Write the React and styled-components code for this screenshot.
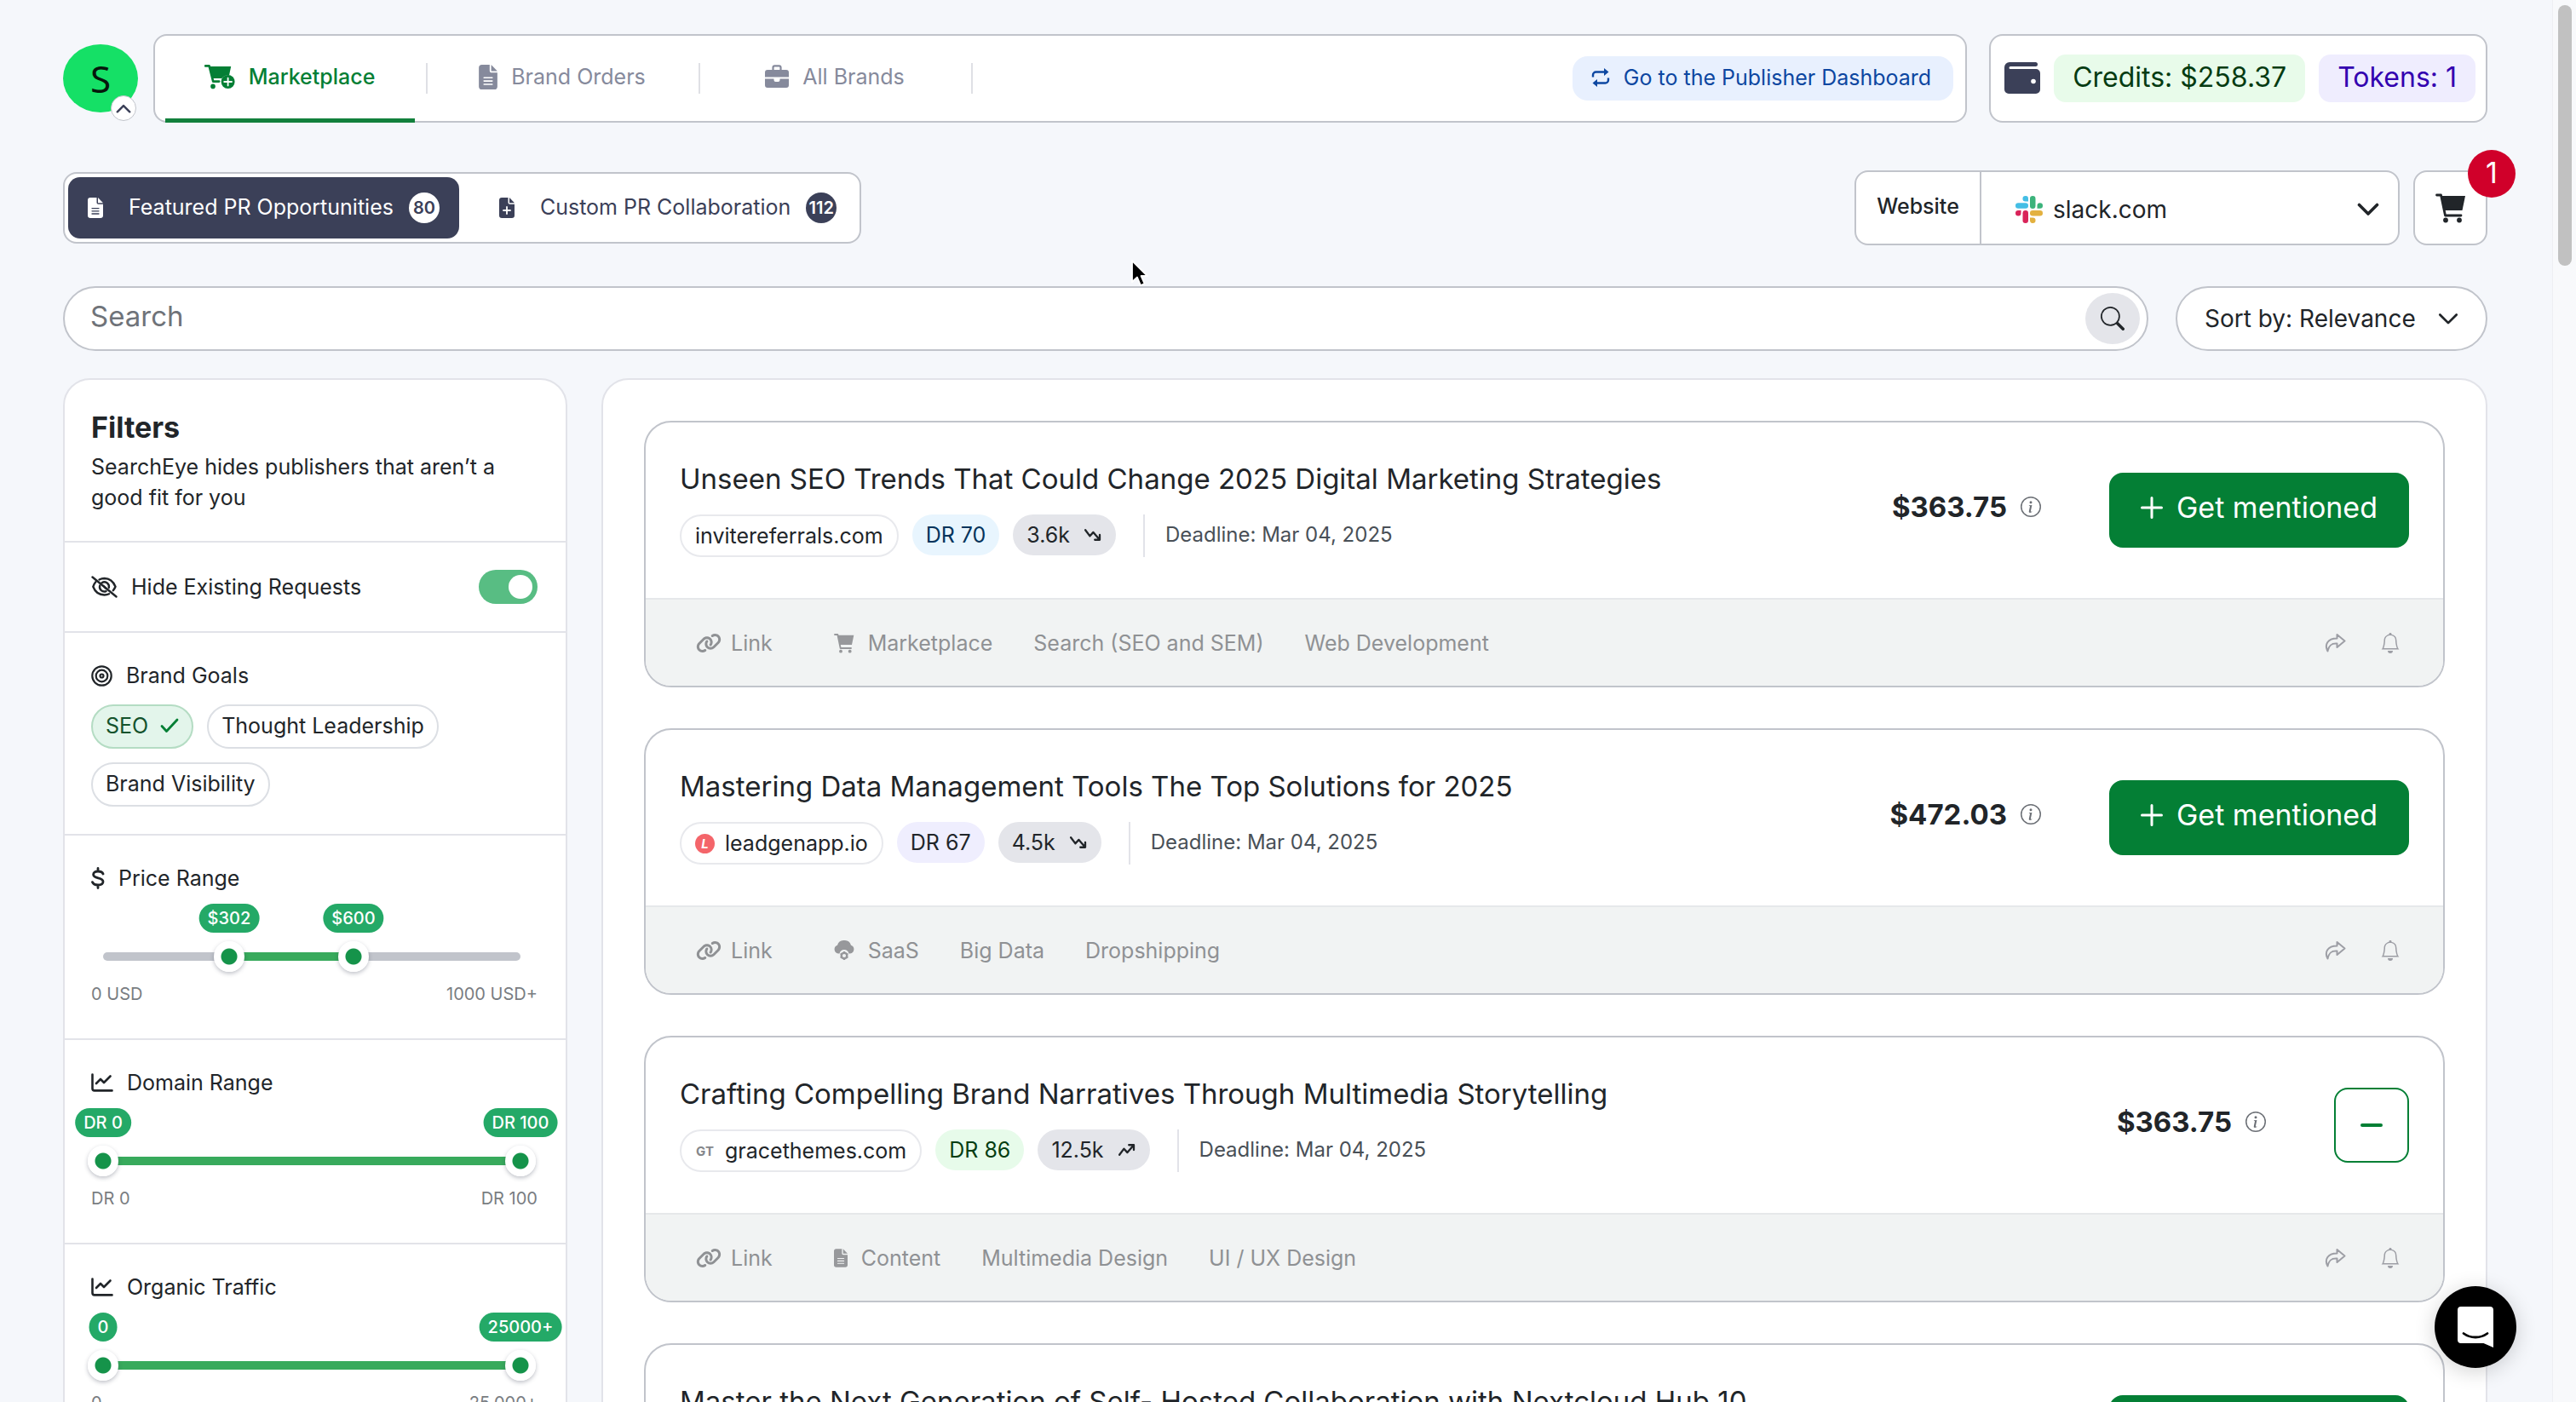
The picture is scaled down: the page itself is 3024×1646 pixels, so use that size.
import React, { useState } from "react";
import styled, { createGlobalStyle, css } from "styled-components";
import { FaLink } from "react-icons/fa6";
import { BsBell, BsInfoCircle, BsSearch } from "react-icons/bs";

const GlobalStyle = createGlobalStyle`
  *, *::before, *::after { box-sizing: border-box; }
  body {
    margin: 0;
    background: #f5f7fb;
    color: #212529;
    font-family: Inter, "Liberation Sans", sans-serif;
    font-size: 25px;
    line-height: 36px;
  }
  h1, h2, h3, p { margin: 0; padding: 0; font-size: inherit; font-weight: inherit; }
  a { color: inherit; text-decoration: none; }
  button, input, select { font: inherit; color: inherit; margin: 0; }
  button { cursor: pointer; }
  svg { display: block; flex: none; }
`;

const line = "#c1c4cb";
const softLine = "#e2e3e9";
const navy = "#3b4058";
const green = "#047f35";

/* ---------- icons ---------- */

const CartPlusIcon = () => (
  <svg width="36" height="30" viewBox="0 0 36 30" fill="none">
    <path d="M5.8 3h25.4L29 13.4c-3-.6-7 .8-8.600 3.600H9.600z" fill={green} />
    <path d="M1 2.400h4.600L10.200 20.600h7" stroke={green} strokeWidth="2.600" strokeLinecap="round" strokeLinejoin="round" />
    <circle cx="10" cy="26.400" r="2.800" fill={green} />
    <circle cx="27.600" cy="21" r="8" fill={green} />
    <path d="M27.600 16.600v8.800M23.200 21h8.800" stroke="#fff" strokeWidth="1.800" strokeLinecap="round" />
  </svg>
);

const FileIcon = ({ w = 18, h = 24, fill = "#fff", ink = navy, plus }) => (
  <svg width={w} height={h} viewBox="0 0 18 24">
    <path d="M3 0h7.500v5.500C10.500 7 11.200 7.700 12.600 7.700H18V21a3 3 0 0 1-3 3H3a3 3 0 0 1-3-3V3a3 3 0 0 1 3-3z" fill={fill} />
    <path d="M12 0 18 6.200h-6z" fill={fill} />
    {plus ? (
      <path d="M9 11v8M5 15h8" stroke={ink} strokeWidth="1.800" strokeLinecap="round" />
    ) : (
      <path d="M5 12.600h8M5 15.800h8M5 19h8" stroke={ink} strokeWidth="1.300" strokeLinecap="round" />
    )}
  </svg>
);

const BriefcaseIcon = () => (
  <svg width="28" height="28" viewBox="0 0 28 28">
    <path d="M9.500 6V3.200c0-1 .6-1.800 1.800-1.800h5.400c1.200 0 1.800.8 1.800 1.800V6" fill="none" stroke="#868a9c" strokeWidth="2.200" />
    <path d="M3 6h22a3 3 0 0 1 3 3v5.500H0V9a3 3 0 0 1 3-3zM0 16.500h10.500v1.500a2 2 0 0 0 2 2h3a2 2 0 0 0 2-2v-1.500H28V24a3 3 0 0 1-3 3H3a3 3 0 0 1-3-3z" fill="#868a9c" />
  </svg>
);

const SwapIcon = () => (
  <svg width="22" height="24" viewBox="0 0 22 24" fill="none" stroke="#0d47a1" strokeWidth="2.400">
    <path d="M2 11.500V9a3.500 3.500 0 0 1 3.500-3.500h11M20 12.500V15a3.500 3.500 0 0 1-3.500 3.500h-11" />
    <path d="M15 1l5.500 4.500L15 10zM7 14l-5.500 4.500L7 23z" fill="#0d47a1" stroke="none" />
  </svg>
);

const WalletIcon = () => (
  <svg width="42" height="38" viewBox="0 0 42 38">
    <path d="M6 0h30.500a2.500 2.500 0 0 1 0 5H7a1.500 1.500 0 0 0 0 3h30a5 5 0 0 1 5 5v19a5 5 0 0 1-5 5H5a5 5 0 0 1-5-5V6a6 6 0 0 1 6-6z" fill={navy} />
    <circle cx="34" cy="22.500" r="2.800" fill="#fff" />
  </svg>
);

const CartIcon = ({ size = 36, fill = "#212529" }) => (
  <svg width={size} height={size} viewBox="0 0 36 36" fill="none">
    <path d="M7 4h28l-3.500 17H10.500z" fill={fill} />
    <path d="M1.500 3h5l5 24H30" stroke={fill} strokeWidth="2.800" strokeLinecap="round" strokeLinejoin="round" />
    <circle cx="12" cy="32.500" r="2.900" fill={fill} />
    <circle cx="28" cy="32.500" r="2.900" fill={fill} />
  </svg>
);

const SlackIcon = () => (
  <svg width="32" height="32" viewBox="0 0 32 32">
    <g fill="#44bee5"><path d="M11.700 0a3.200 3.200 0 1 0 0 6.500h3.300V3.200A3.200 3.200 0 0 0 11.700 0z" /><rect y="8.300" width="15" height="6.500" rx="3.200" /></g>
    <g fill="#3bb37b"><rect x="17" width="6.500" height="15" rx="3.200" /><path d="M32 11.600a3.200 3.200 0 1 0-6.500 0v3.200h3.300a3.200 3.200 0 0 0 3.200-3.200z" /></g>
    <g fill="#e3b13f"><rect x="17" y="17" width="15" height="6.500" rx="3.200" /><path d="M20.300 32a3.200 3.200 0 1 0 0-6.500H17v3.300a3.200 3.200 0 0 0 3.300 3.200z" /></g>
    <g fill="#d9245a"><rect x="8.500" y="17" width="6.500" height="15" rx="3.200" /><path d="M0 20.300a3.200 3.200 0 1 0 6.500 0V17H3.200A3.200 3.200 0 0 0 0 20.300z" /></g>
  </svg>
);

const ChevronIcon = ({ w = 26, h = 16, stroke = "#212529", sw = 3.600, up }) => (
  <svg width={w} height={h} viewBox="0 0 26 16" fill="none">
    <path d={up ? "M2.500 13.500 13 3l10.500 10.500" : "M2.500 2.500 13 13 23.500 2.500"} stroke={stroke} strokeWidth={sw} strokeLinecap="round" strokeLinejoin="round" />
  </svg>
);

const EyeOffIcon = () => (
  <svg width="31" height="26" viewBox="0 0 31 26" fill="none" stroke="#212529" strokeWidth="2.400" strokeLinecap="round">
    <path d="M1.500 1.500 29.500 24.500" />
    <path d="M9.500 4.500A14 14 0 0 1 15.500 3c6 0 10.500 3.600 13 9.800-.7 1.700-1.600 3.200-2.700 4.500M5.500 7C4 8.600 3 10.500 2.300 12.800 4.600 18.800 9.300 22.500 15.500 22.500c2 0 3.900-.4 5.500-1.200" />
    <path d="M12.500 8.200a5.500 5.500 0 0 1 8.300 5.800M10.200 11.500a5.500 5.500 0 0 0 7.300 6.600" />
    <path d="M14.500 12l3 3" />
  </svg>
);

const TargetIcon = () => (
  <svg width="25" height="25" viewBox="0 0 25 25" fill="none" stroke="#212529" strokeWidth="2.200">
    <circle cx="12.500" cy="12.500" r="11.200" />
    <circle cx="12.500" cy="12.500" r="6.800" />
    <circle cx="12.500" cy="12.500" r="2" />
  </svg>
);

const DollarIcon = () => (
  <svg width="16" height="26" viewBox="0 0 16 26" fill="none" stroke="#212529" strokeWidth="2.800" strokeLinecap="round">
    <path d="M8 1.500V5M8 21v3.500M14 8c-.6-2-2.600-3-6-3-3.200 0-5.400 1.200-5.400 3.800C2.600 14.200 14 11.500 14 17c0 2.700-2.600 4-6 4-3.500 0-5.600-1.200-6.500-3.400" />
  </svg>
);

const GraphIcon = () => (
  <svg width="26" height="22" viewBox="0 0 26 22" fill="none" stroke="#212529" strokeWidth="2.600" strokeLinecap="round" strokeLinejoin="round">
    <path d="M1.500 1.500V18c0 1.600.8 2.400 2.400 2.400h20.600" />
    <path d="M6 12l5-5 4 4 7.500-7.500" />
  </svg>
);

const CheckIcon = () => (
  <svg width="22" height="18" viewBox="0 0 22 18" fill="none" stroke={green} strokeWidth="2.800" strokeLinecap="round" strokeLinejoin="round">
    <path d="M2 9.500 7.500 15.500 20 2" />
  </svg>
);

const TrendIcon = ({ up }) => (
  <svg width="22" height="16" viewBox="0 0 24 18" fill="none" stroke="#212529" strokeWidth="2.600" strokeLinecap="round" strokeLinejoin="round">
    {up ? <path d="M2 15.500 8 7.500l4.500 5L20.500 3M14.500 2.500h6.500V9" /> : <path d="M2 2.500 8 10.500l4.500-5 8 9.500M14.500 15.500h6.500V9" />}
  </svg>
);

const CloudIcon = () => (
  <svg width="24" height="24" viewBox="0 0 24 24" fill="none">
    <path d="M6.500 15.500H5A5 5 0 0 1 4 5.800 8 8 0 0 1 12 0a8 8 0 0 1 8 5.800 5 5 0 0 1-1 9.700h-1.500A6 6 0 0 0 12 11a6 6 0 0 0-5.500 4.500z" fill="#97989b" />
    <circle cx="12" cy="18" r="3.300" stroke="#97989b" strokeWidth="2.400" />
    <path d="M12 13v1.500M12 21.500V23M7.600 15.500l1.400.8M15 19.700l1.400.8M7.600 20.500l1.400-.8M15 16.300l1.400-.8" stroke="#97989b" strokeWidth="2" />
  </svg>
);

const PlusIcon = () => (
  <svg width="26" height="26" viewBox="0 0 26 26" stroke="#fff" strokeWidth="3" strokeLinecap="round">
    <path d="M13 1.500v23M1.500 13h23" />
  </svg>
);

const ShareIcon = () => (
  <svg width="26" height="24" viewBox="0 0 26 24" fill="none" stroke="#9d9ea5" strokeWidth="2" strokeLinejoin="round" strokeLinecap="round">
    <path d="M15.500 2 24.500 9.500l-9 7.500v-4.500C9.500 12 6 14 4.500 21.500 .5 14 4 6.500 15.500 6.500z" />
  </svg>
);

const MessengerIcon = () => (
  <svg width="44" height="50" viewBox="0 0 44 50">
    <path d="M5 1h34a4 4 0 0 1 4 4v44l-11.500-5H5a4 4 0 0 1-4-4V5a4 4 0 0 1 4-4z" fill="#fff" />
    <path d="M8 32.500c8 6 20 6 28 0" fill="none" stroke="#000" strokeWidth="2.800" strokeLinecap="round" />
  </svg>
);

const PointerIcon = () => (
  <svg width="22" height="34" viewBox="0 0 22 34">
    <path d="M2 2v25l6-5.500 4 9.500 4.500-2-4-9H20z" fill="#000" stroke="#fff" strokeWidth="1.800" strokeLinejoin="round" />
  </svg>
);

/* ---------- shell ---------- */

const Shell = styled.div`
  height: 100vh;
  overflow-y: auto;
  scrollbar-width: none;
  padding: 40px 104px 0 74px;
`;

const ScrollTrack = styled.div`
  position: fixed;
  inset: 0 0 0 auto;
  width: 28px;
  padding: 6px 6px 0;
  border-left: 1px solid #eeeff3;
  background: #f8f9fb;
`;

const ScrollThumb = styled.div`
  width: 16px;
  height: 306px;
  border-radius: 8px;
  background: #c1c1c1;
`;

const Row = styled.div`
  display: flex;
  align-items: center;
  justify-content: space-between;
  gap: ${(p) => p.$gap || 0}px;
  margin-bottom: ${(p) => p.$below || 0}px;
`;

const Panel = styled.div`
  border: 2px solid ${line};
  border-radius: 16px;
  background: #fff;
`;

/* ---------- top bar ---------- */

const Avatar = styled.button`
  position: relative;
  width: 88px;
  height: 80px;
  margin-right: 18px;
  padding: 0;
  border: 0;
  border-radius: 50%;
  background: #15e066;
  color: #06170c;
  font-family: "Noto Sans", sans-serif;
  font-size: 44px;
`;

const AvatarBadge = styled.span`
  position: absolute;
  right: 2px;
  bottom: -10px;
  display: grid;
  place-items: center;
  width: 30px;
  height: 30px;
  border: 1px solid ${line};
  border-radius: 50%;
  background: #fff;
`;

const NavBar = styled(Panel).attrs({ as: "nav" })`
  display: flex;
  align-items: center;
  flex: 1;
  height: 104px;
  margin-right: 26px;
  padding-right: 14px;
`;

const NavLink = styled.a`
  position: relative;
  display: flex;
  align-items: center;
  justify-content: center;
  gap: 16px;
  width: 320px;
  height: 100px;
  padding: 0 4px 4px 0;
  color: ${(p) => (p.$active ? green : "#868a9c")};
  font-weight: ${(p) => (p.$active ? 500 : 400)};

  &::before {
    content: "";
    position: absolute;
    right: 0;
    top: 32px;
    height: 36px;
    border-right: 2px solid #dfe0e5;
  }
  ${(p) =>
    p.$active &&
    css`
      &::after {
        content: "";
        position: absolute;
        left: 12px;
        right: 15px;
        bottom: -2px;
        height: 5px;
        background: #12803c;
      }
    `}
`;

const DashboardLink = styled.a`
  display: flex;
  align-items: center;
  gap: 16px;
  height: 52px;
  margin-left: auto;
  padding: 0 26px 2px 22px;
  border-radius: 18px;
  background: #e8f0fe;
  color: #0d47a1;
`;

const Wallet = styled(Panel)`
  display: flex;
  align-items: center;
  gap: 16px;
  height: 104px;
  padding: 0 12px 0 16px;
`;

const Balance = styled.span`
  height: 56px;
  padding: 0 22px;
  border-radius: 14px;
  background: ${(p) => p.$bg};
  color: ${(p) => p.$ink};
  font-size: 32px;
  line-height: 54px;
`;

/* ---------- tabs, website picker ---------- */

const TabBar = styled(Panel)`
  display: flex;
  gap: 24px;
  height: 84px;
  padding: 4px;
`;

const Tab = styled.button`
  display: flex;
  align-items: center;
  height: 72px;
  padding: 0 23px;
  border: 0;
  border-radius: 14px;
  background: ${(p) => (p.$active ? navy : "transparent")};
  color: ${(p) => (p.$active ? "#fff" : navy)};
`;

const TabText = styled.span`
  margin: 0 18px 0 30px;
  padding-bottom: 2px;
`;

const Count = styled.span`
  width: 36px;
  height: 36px;
  border-radius: 50%;
  background: ${(p) => (p.$active ? "#fff" : navy)};
  color: ${(p) => (p.$active ? navy : "#fff")};
  font-size: 20px;
  font-weight: 600;
  text-align: center;
`;

const Picker = styled(Panel)`
  display: flex;
  align-items: center;
  width: 640px;
  height: 88px;
  margin-left: auto;
`;

const PickerLabel = styled.label`
  display: flex;
  align-items: center;
  justify-content: center;
  width: 147px;
  height: 84px;
  padding-bottom: 4px;
  border-right: 2px solid ${line};
  font-weight: 500;
`;

const PickerField = styled.div`
  display: flex;
  align-items: center;
  flex: 1;
  gap: 12px;
  padding: 4px 22px 0 40px;
`;

const BareSelect = styled.select`
  flex: 1;
  min-width: 0;
  padding: 0;
  border: 0;
  outline: 0;
  appearance: none;
  background: transparent;
  font-size: 28px;
`;

const CartButton = styled(Panel).attrs({ as: "button", "aria-label": "Cart" })`
  position: relative;
  display: grid;
  place-items: center;
  width: 87px;
  height: 88px;
  margin-left: 16px;
  padding: 0;
`;

const CartBadge = styled.span`
  position: absolute;
  top: -26px;
  right: -35px;
  width: 56px;
  height: 56px;
  border-radius: 50%;
  background: #d0002a;
  color: #fff;
  font-size: 34px;
  line-height: 54px;
`;

/* ---------- search ---------- */

const SearchForm = styled(Panel).attrs({ as: "form" })`
  display: flex;
  align-items: center;
  flex: 1;
  height: 76px;
  padding: 0 8px 0 30px;
  border-radius: 38px;
`;

const SearchInput = styled.input`
  flex: 1;
  min-width: 0;
  padding: 0 0 6px;
  border: 0;
  outline: 0;
  background: transparent;
  font-size: 33px;
  &::placeholder { color: #6f7379; opacity: 1; }
`;

const SearchButton = styled.button`
  display: grid;
  place-items: center;
  width: 64px;
  height: 60px;
  padding: 0;
  border: 0;
  border-radius: 50%;
  background: #e4e5ea;
`;

const SortBox = styled(Panel).attrs({ as: "label" })`
  display: flex;
  align-items: center;
  width: 366px;
  height: 76px;
  padding: 0 32px;
  border-radius: 38px;
`;

/* ---------- filters ---------- */

const Columns = styled.div`
  display: grid;
  grid-template-columns: 592px minmax(0, 1fr);
  gap: 40px;
`;

const Sidebar = styled.aside`
  border: 2px solid ${softLine};
  border-radius: 32px 32px 0 0;
  background: #fff;
`;

const Section = styled.section`
  padding: ${(p) => p.$top || 32}px 33px ${(p) => p.$bottom || 32}px 31px;
  & + & { border-top: 2px solid ${softLine}; }
`;

const SidebarTitle = styled.h1`
  margin-bottom: 6px;
  font-size: 34px;
  font-weight: 700;
  line-height: 44px;
`;

const FilterHead = styled.h2`
  display: flex;
  align-items: center;
  gap: 16px;
`;

const ToggleRow = styled.label`
  display: flex;
  align-items: center;
  gap: 16px;
`;

const Toggle = styled.input.attrs({ type: "checkbox" })`
  appearance: none;
  width: 69px;
  height: 40px;
  margin-left: auto;
  padding: 6px;
  border-radius: 20px;
  background: #a9adb8;
  &::before {
    content: "";
    display: block;
    width: 28px;
    height: 28px;
    border-radius: 50%;
    background: #fff;
  }
  &:checked { background: #58bd83; }
  &:checked::before { margin-left: 29px; }
`;

const Chips = styled.div`
  display: flex;
  flex-wrap: wrap;
  gap: 16px;
  margin-top: 16px;
`;

const Chip = styled.button`
  display: flex;
  align-items: center;
  gap: 14px;
  height: 52px;
  padding: 0 15px 2px;
  border: 2px solid ${(p) => (p.$on ? "#b4dcc3" : "#dcdfe4")};
  border-radius: 26px;
  background: ${(p) => (p.$on ? "#e3f5eb" : "#fff")};
  color: ${(p) => (p.$on ? "#14532d" : "#212529")};
`;

const Slider = styled.div`
  display: grid;
  align-items: center;
  margin: 0 2px 0 -4px;
`;

const Bubbles = styled.div`
  position: relative;
  height: 34px;
  margin: 12px 18px 10px;
`;

const Bubble = styled.output`
  position: absolute;
  height: 34px;
  padding: 0 10px;
  border-radius: 17px;
  background: #24a967;
  color: #fff;
  font-size: 20px;
  font-weight: 500;
  line-height: 34px;
  white-space: nowrap;
  transform: translateX(-50%);
`;

const Track = styled.div`
  grid-area: 2 / 1;
  height: 10px;
  margin: 0 18px;
  border-radius: 5px;
`;

const Range = styled.input.attrs({ type: "range" })`
  grid-area: 2 / 1;
  appearance: none;
  width: 100%;
  height: 36px;
  background: transparent;
  pointer-events: none;
  &::-webkit-slider-thumb {
    appearance: none;
    width: 36px;
    height: 36px;
    border: 0;
    border-radius: 50%;
    background: radial-gradient(circle, #15934a 0 9px, #fff 10px);
    box-shadow: 0 2px 5px rgba(40, 45, 70, 0.3);
    pointer-events: auto;
  }
`;

const Limits = styled.div`
  display: flex;
  justify-content: space-between;
  margin-top: 8px;
  color: #797d82;
  font-size: 20px;
`;

/* ---------- listing ---------- */

const Listing = styled.main`
  display: flex;
  flex-direction: column;
  gap: 48px;
  padding: 48px;
  border: 2px solid ${softLine};
  border-radius: 32px 32px 0 0;
  background: #fff;
`;

const Card = styled.article`
  overflow: hidden;
  border: 2px solid ${line};
  border-radius: 32px;
  background: #fff;
`;

const CardTop = styled.div`
  display: flex;
  align-items: center;
  padding: 0 40px;
`;

const CardInfo = styled.div`
  flex: 1;
  padding: 44px 0 48px;
`;

const CardTitle = styled.h3`
  font-size: 33px;
  line-height: 44px;
`;

const Meta = styled.div`
  display: flex;
  align-items: flex-start;
  margin-top: 20px;
`;

const Pill = styled.span`
  display: flex;
  align-items: center;
  gap: 16px;
  height: ${(p) => (p.$outlined ? 50 : 48)}px;
  margin-right: 16px;
  padding: 0 16px;
  border: ${(p) => (p.$outlined ? "2px solid #e8e9ed" : "0")};
  border-radius: 25px;
  background: ${(p) => p.$bg || "#fff"};
  color: ${(p) => p.$ink || "#212529"};
`;

const SiteMark = styled.span`
  display: grid;
  place-items: center;
  width: 23px;
  height: 23px;
  margin-right: -4px;
  border-radius: 50%;
  background: ${(p) => p.$bg};
  color: ${(p) => p.$ink};
  font-size: 15px;
  font-weight: 700;
  font-style: ${(p) => (p.$slant ? "italic" : "normal")};
  line-height: 23px;
`;

const Deadline = styled.p`
  height: 50px;
  margin-left: 16px;
  padding-left: 24px;
  border-left: 2px solid ${softLine};
  color: #495057;
  font-size: 24px;
  line-height: 48px;
`;

const Price = styled.div`
  display: flex;
  align-items: center;
  gap: 16px;
  margin-right: 80px;
  padding-bottom: 8px;
  font-size: 33px;
  font-weight: 700;
  line-height: 44px;
  svg { color: #6b6f75; }
`;

const MentionButton = styled.button`
  display: flex;
  align-items: center;
  justify-content: center;
  gap: 16px;
  width: ${(p) => (p.$added ? 88 : 352)}px;
  height: 88px;
  padding: 0 0 ${(p) => (p.$added ? 0 : 6)}px;
  border: 2px solid ${green};
  border-radius: 16px;
  background: ${(p) => (p.$added ? "#fff" : green)};
  color: #fff;
  font-size: 34px;
`;

const Minus = styled.span`
  width: 26px;
  height: 4px;
  border-radius: 2px;
  background: ${green};
`;

const CardFoot = styled.div`
  display: flex;
  align-items: center;
  gap: 48px;
  height: 103px;
  padding: 0 50px 0 59px;
  border-top: 2px solid #e6e8ea;
  background: #f1f3f3;
  color: #8f9194;
`;

const Tag = styled.span`
  display: flex;
  align-items: center;
  gap: ${(p) => p.$gap || 16}px;
  margin-right: ${(p) => p.$after || 0}px;
`;

const FootActions = styled.div`
  display: flex;
  gap: 40px;
  margin-left: auto;
`;

const IconButton = styled.button`
  padding: 0;
  border: 0;
  background: none;
  color: #9d9ea5;
`;

/* ---------- floating ---------- */

const Messenger = styled.button`
  position: fixed;
  right: 70px;
  bottom: 40px;
  display: grid;
  place-items: center;
  width: 96px;
  height: 96px;
  padding: 0;
  border: 0;
  border-radius: 50%;
  background: #000;
  box-shadow: 0 4px 24px rgba(0, 0, 0, 0.18);
`;

const Pointer = styled.div`
  position: fixed;
  left: 1327px;
  top: 304px;
  pointer-events: none;
`;

/* ---------- data ---------- */

const grey = "#97989b";

const cards = [
  {
    title: "Unseen SEO Trends That Could Change 2025 Digital Marketing Strategies",
    site: "invitereferrals.com",
    dr: ["DR 70", "#e8f5fe", "#06345c"],
    traffic: "3.6k",
    price: "$363.75",
    icon: <CartIcon size={24} fill={grey} />,
    tags: ["Marketplace", "Search (SEO and SEM)", "Web Development"],
  },
  {
    title: "Mastering Data Management Tools The Top Solutions for 2025",
    site: "leadgenapp.io",
    mark: <SiteMark $bg="#f4656a" $ink="#fff" $slant>L</SiteMark>,
    dr: ["DR 67", "#efeefe", "#212529"],
    traffic: "4.5k",
    price: "$472.03",
    icon: <CloudIcon />,
    tags: ["SaaS", "Big Data", "Dropshipping"],
  },
  {
    title: "Crafting Compelling Brand Narratives Through Multimedia Storytelling",
    site: "gracethemes.com",
    mark: <SiteMark $bg="#fff" $ink="#85878b">GT</SiteMark>,
    dr: ["DR 86", "#e7fbea", "#053d12"],
    traffic: "12.5k",
    up: true,
    price: "$363.75",
    added: true,
    icon: <FileIcon w={16} h={22} fill={grey} ink="#f1f3f3" />,
    tags: ["Content", "Multimedia Design", "UI / UX Design"],
  },
  {
    title: "Master the Next Generation of Self- Hosted Collaboration with Nextcloud Hub 10",
    site: "nextcloud.com",
    dr: ["DR 90", "#e7fbea", "#053d12"],
    traffic: "9.2k",
    up: true,
    price: "$472.03",
    icon: <CloudIcon />,
    tags: ["SaaS"],
  },
];

function Opportunity({ card }) {
  const [dr, drBg, drInk] = card.dr;
  return (
    <Card>
      <CardTop>
        <CardInfo>
          <CardTitle>{card.title}</CardTitle>
          <Meta>
            <Pill $outlined as="a" href="#site">{card.mark}{card.site}</Pill>
            <Pill $bg={drBg} $ink={drInk}>{dr}</Pill>
            <Pill $bg="#e4e5ea">{card.traffic}<TrendIcon up={card.up} /></Pill>
            <Deadline>Deadline: Mar 04, 2025</Deadline>
          </Meta>
        </CardInfo>
        <Price>{card.price}<BsInfoCircle size={24} /></Price>
        {card.added ? (
          <MentionButton $added aria-label="Remove"><Minus /></MentionButton>
        ) : (
          <MentionButton><PlusIcon />Get mentioned</MentionButton>
        )}
      </CardTop>
      <CardFoot>
        <Tag $gap={11} $after={24}><FaLink size={30} />Link</Tag>
        {card.tags.map((tag, i) => (
          <Tag key={tag}>{i === 0 && card.icon}{tag}</Tag>
        ))}
        <FootActions>
          <IconButton aria-label="Share"><ShareIcon /></IconButton>
          <IconButton aria-label="Notify me"><BsBell size={24} /></IconButton>
        </FootActions>
      </CardFoot>
    </Card>
  );
}

function RangeFilter({ icon, label, max, start, format, limits }) {
  const [low, setLow] = useState(start[0]);
  const [high, setHigh] = useState(start[1]);
  const a = (low / max) * 100;
  const b = (high / max) * 100;
  const fill = `linear-gradient(90deg, #c1c4cb ${a}%, #38aa5c ${a}%, #38aa5c ${b}%, #c1c4cb ${b}%)`;
  return (
    <Section $top={32} $bottom={34}>
      <FilterHead>{icon}{label}</FilterHead>
      <Slider>
        <Bubbles>
          <Bubble style={{ left: `${a}%` }}>{format(low)}</Bubble>
          <Bubble style={{ left: `${b}%` }}>{format(high)}</Bubble>
        </Bubbles>
        <Track style={{ background: fill }} />
        <Range aria-label={`${label} minimum`} max={max} value={low} onChange={(e) => setLow(Math.min(+e.target.value, high))} />
        <Range aria-label={`${label} maximum`} max={max} value={high} onChange={(e) => setHigh(Math.max(+e.target.value, low))} />
      </Slider>
      <Limits><span>{limits[0]}</span><span>{limits[1]}</span></Limits>
    </Section>
  );
}

export default function App() {
  const [hide, setHide] = useState(true);
  return (
    <>
      <GlobalStyle />
      <Shell>
        <Row $below={56} as="header">
          <Avatar aria-label="Account">
            S
            <AvatarBadge><ChevronIcon up w={18} h={11} stroke={navy} /></AvatarBadge>
          </Avatar>
          <NavBar>
            <NavLink href="#marketplace" $active><CartPlusIcon />Marketplace</NavLink>
            <NavLink href="#orders"><FileIcon w={22} h={29} fill="#868a9c" ink="#fff" />Brand Orders</NavLink>
            <NavLink href="#brands"><BriefcaseIcon />All Brands</NavLink>
            <DashboardLink href="#publisher"><SwapIcon />Go to the Publisher Dashboard</DashboardLink>
          </NavBar>
          <Wallet>
            <WalletIcon />
            <Balance $bg="#e8fbea" $ink="#063b12">Credits: $258.37</Balance>
            <Balance $bg="#efedfe" $ink="#3300b0">Tokens: 1</Balance>
          </Wallet>
        </Row>

        <Row $below={48}>
          <TabBar>
            <Tab $active><FileIcon /><TabText>Featured PR Opportunities</TabText><Count $active>80</Count></Tab>
            <Tab><FileIcon plus fill={navy} ink="#fff" /><TabText>Custom PR Collaboration</TabText><Count>112</Count></Tab>
          </TabBar>
          <Picker>
            <PickerLabel htmlFor="website">Website</PickerLabel>
            <PickerField>
              <SlackIcon />
              <BareSelect id="website"><option>slack.com</option></BareSelect>
              <ChevronIcon />
            </PickerField>
          </Picker>
          <CartButton><CartIcon /><CartBadge>1</CartBadge></CartButton>
        </Row>

        <Row $gap={32} $below={32}>
          <SearchForm onSubmit={(e) => e.preventDefault()}>
            <SearchInput placeholder="Search" aria-label="Search" />
            <SearchButton aria-label="Run search"><BsSearch size={28} /></SearchButton>
          </SearchForm>
          <SortBox>
            <BareSelect aria-label="Sort"><option>Sort by: Relevance</option></BareSelect>
            <ChevronIcon w={24} h={15} sw={3} />
          </SortBox>
        </Row>

        <Columns>
          <Sidebar>
            <Section $top={34} $bottom={33}>
              <SidebarTitle>Filters</SidebarTitle>
              <p>SearchEye hides publishers that aren’t a good fit for you</p>
            </Section>
            <Section>
              <ToggleRow>
                <EyeOffIcon />Hide Existing Requests
                <Toggle checked={hide} onChange={() => setHide(!hide)} />
              </ToggleRow>
            </Section>
            <Section>
              <FilterHead><TargetIcon />Brand Goals</FilterHead>
              <Chips>
                <Chip $on>SEO<CheckIcon /></Chip>
                <Chip>Thought Leadership</Chip>
                <Chip>Brand Visibility</Chip>
              </Chips>
            </Section>
            <RangeFilter icon={<DollarIcon />} label="Price Range" max={1000} start={[302, 600]} format={(v) => `$${v}`} limits={["0 USD", "1000 USD+"]} />
            <RangeFilter icon={<GraphIcon />} label="Domain Range" max={100} start={[0, 100]} format={(v) => `DR ${v}`} limits={["DR 0", "DR 100"]} />
            <RangeFilter icon={<GraphIcon />} label="Organic Traffic" max={25000} start={[0, 25000]} format={(v) => (v === 25000 ? "25000+" : `${v}`)} limits={["0", "25,000+"]} />
          </Sidebar>
          <Listing>
            {cards.map((card) => <Opportunity key={card.title} card={card} />)}
          </Listing>
        </Columns>
      </Shell>
      <ScrollTrack><ScrollThumb /></ScrollTrack>
      <Messenger aria-label="Open chat"><MessengerIcon /></Messenger>
      <Pointer><PointerIcon /></Pointer>
    </>
  );
}
